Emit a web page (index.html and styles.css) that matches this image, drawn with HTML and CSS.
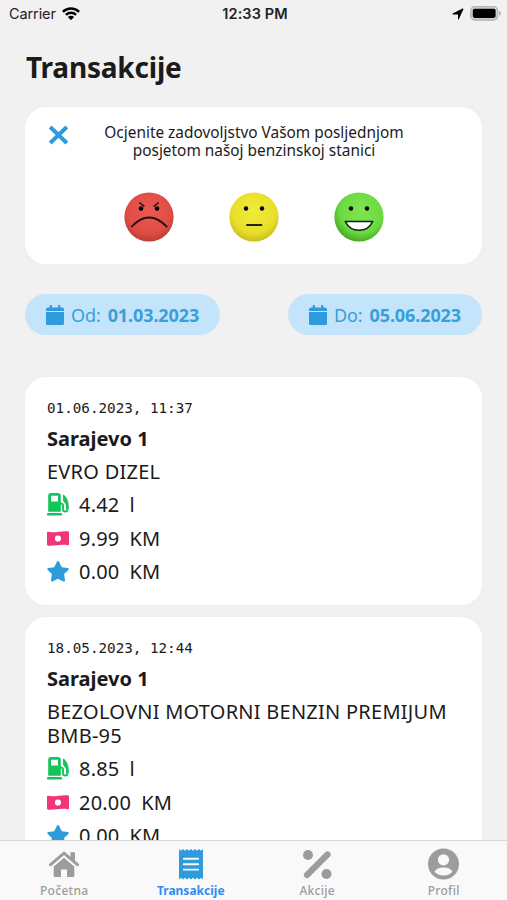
FILE: index.html
```html
<!DOCTYPE html>
<html lang="bs">
<head>
  <meta charset="UTF-8">
  <meta name="viewport" content="width=device-width, initial-scale=1.0">
  <title>Transakcije</title>
  <link rel="stylesheet" href="styles.css">
</head>
<body>
  <!-- shared icons -->
  <svg class="sprite" width="0" height="0" aria-hidden="true">
    <symbol id="calendar" viewBox="0 0 18 20">
      <path d="M2 2.500h1.700V1a1 1 0 0 1 2.200 0v1.500h6.200V1a1 1 0 0 1 2.200 0v1.500H16a2 2 0 0 1 2 2V6H0V4.500a2 2 0 0 1 2-2z"/>
      <path d="M0 7h18v11.500a1.500 1.500 0 0 1-1.500 1.500h-15a1.500 1.500 0 0 1-1.500-1.500z"/>
    </symbol>
    <symbol id="pump" viewBox="0 0 22 23">
      <path fill-rule="evenodd" d="M1.200 18.800V3a3 3 0 0 1 3-3h6.600a3 3 0 0 1 3 3v15.800zM4 2.800v5.600h7V2.800z"/>
      <rect y="20" width="15" height="2.600" rx=".8"/>
      <path d="M13 10.500h.8q2.200 0 2.200 2.300v3.400q0 2.300 2.200 2.300t2.200-2.300c0-3-.4-5.400-1.700-7.400" fill="none" stroke="currentColor" stroke-width="1.900"/>
      <path d="M16 1.300c2.800 1.800 4.700 4.500 5.400 8.700q.5 3.500.3 6.200h-2.200q.1-3.700-1-5.800c-1.500-.7-2.500-2.100-2.500-3.900V5.200z"/>
    </symbol>
    <symbol id="money" viewBox="0 0 22 15">
      <path fill-rule="evenodd" d="M0 1.600Q0 .5 1.200.7C8 2.200 12.500-.3 20.700.2q1.300.1 1.300 1.200v11.800q0 1.200-1.300 1C13 13 9 15.300 1.300 14.800Q0 14.700 0 13.600zM11 4.400a3.100 3.100 0 1 0 0 6.200 3.100 3.100 0 0 0 0-6.200z"/>
    </symbol>
    <symbol id="star" viewBox="0 0 22 21">
      <path d="M9.900.8q1.100-1.600 2.200 0l2.700 5.500 5.900.8q1.900.5.600 1.900l-4.200 4.100.9 6.100q0 1.900-1.700 1.200L11 17.700l-5.300 2.700q-1.700.7-1.700-1.200l.9-6.100L.7 9q-1.300-1.400.6-1.900l5.900-.8z"/>
    </symbol>
  </svg>

  <div class="app">
    <div class="status-bar">
      <div class="carrier">
        <span>Carrier</span>
        <svg width="18" height="13" viewBox="0 0 18 13">
          <g fill="none" stroke="#000" stroke-width="2.500">
            <path d="M.9 4.800a11.600 11.600 0 0 1 16.200 0"/>
            <path d="M3.900 7.900a7.300 7.300 0 0 1 10.200 0"/>
          </g>
          <path d="M9 13.200L5.900 10a4.400 4.400 0 0 1 6.200 0z"/>
        </svg>
      </div>
      <div class="time">12:33 PM</div>
      <div class="status-icons">
        <svg width="12" height="12" viewBox="0 0 12 12"><path d="M.6 5.600L10.600.5q1-.3.800.7L6.800 11.200q-.6.900-.8-.3V6.400H1.100Q-.2 6.200.6 5.600z"/></svg>
        <svg width="31" height="15" viewBox="0 0 31 15">
          <rect x=".7" y=".7" width="27" height="13.300" rx="4" fill="#d0d0d0" stroke="#b4b4b4" stroke-width="1.300"/>
          <rect x="2.800" y="2.800" width="22.800" height="9.100" rx="1.800"/>
          <path d="M29 4.800q2 .7 2 2.500t-2 2.500z" fill="#b4b4b4"/>
        </svg>
      </div>
    </div>

    <h1>Transakcije</h1>

    <div class="card rating">
      <svg class="close" width="21" height="20" viewBox="0 0 21 20"><path d="M2.200 2l16.600 16M18.800 2L2.200 18"/></svg>
      <p>Ocjenite zadovoljstvo Vašom posljednjom posjetom našoj benzinskoj stanici</p>
      <div class="faces">
        <svg width="50" height="50" viewBox="0 0 50 50">
          <defs><radialGradient id="red" cx=".5" cy=".38" r=".64"><stop offset="0" stop-color="#ea5850"/><stop offset=".7" stop-color="#df4d46"/><stop offset="1" stop-color="#b93a33"/></radialGradient></defs>
          <circle cx="25" cy="25" r="24.600" fill="url(#red)"/>
          <circle cx="17" cy="16.500" r="2.300"/><circle cx="33" cy="16.500" r="2.300"/>
          <path d="M15.200 10.500l5.200 3.900M34.800 10.500l-5.200 3.900" fill="none" stroke="#211" stroke-width="1.500"/>
          <path d="M7.800 34.500q17.200-18 34.800 0" fill="none" stroke="#211" stroke-width="1.800" stroke-linecap="round"/>
        </svg>
        <svg width="50" height="50" viewBox="0 0 50 50">
          <defs><radialGradient id="yellow" cx=".5" cy=".38" r=".64"><stop offset="0" stop-color="#f0ec3a"/><stop offset=".7" stop-color="#e8df2a"/><stop offset="1" stop-color="#c4b91c"/></radialGradient></defs>
          <circle cx="25" cy="25" r="24.600" fill="url(#yellow)"/>
          <circle cx="17" cy="16.500" r="2.200"/><circle cx="33" cy="16.500" r="2.200"/>
          <path d="M18 33h14.500" stroke="#221" stroke-width="1.800" stroke-linecap="round"/>
        </svg>
        <svg width="50" height="50" viewBox="0 0 50 50">
          <defs><radialGradient id="green" cx=".55" cy=".38" r=".64"><stop offset="0" stop-color="#7fe552"/><stop offset=".7" stop-color="#6cd941"/><stop offset="1" stop-color="#40a622"/></radialGradient></defs>
          <circle cx="25" cy="25" r="24.600" fill="url(#green)"/>
          <circle cx="17" cy="16.500" r="2.200"/><circle cx="33" cy="16.500" r="2.200"/>
          <path d="M11.300 29.500h27.400q-4.200 8.800-13.700 8.800t-13.700-8.800z" fill="#fff" stroke="#121" stroke-width="1.600" stroke-linejoin="round"/>
        </svg>
      </div>
    </div>

    <div class="filters">
      <div class="chip">
        <svg width="18" height="20"><use href="#calendar"/></svg>
        <span class="chip-label">Od:</span>
        <span class="chip-date">01.03.2023</span>
      </div>
      <div class="chip">
        <svg width="18" height="20"><use href="#calendar"/></svg>
        <span class="chip-label">Do:</span>
        <span class="chip-date">05.06.2023</span>
      </div>
    </div>

    <div class="list">
      <div class="card transaction">
        <div class="date">01.06.2023, 11:37</div>
        <div class="station">Sarajevo 1</div>
        <div class="product">EVRO DIZEL</div>
        <div class="row"><svg class="pump" width="22" height="23"><use href="#pump"/></svg><span>4.42</span><span>l</span></div>
        <div class="row"><svg class="money" width="22" height="15"><use href="#money"/></svg><span>9.99</span><span>KM</span></div>
        <div class="row"><svg class="star" width="22" height="21"><use href="#star"/></svg><span>0.00</span><span>KM</span></div>
      </div>
      <div class="card transaction">
        <div class="date">18.05.2023, 12:44</div>
        <div class="station">Sarajevo 1</div>
        <div class="product">BEZOLOVNI MOTORNI BENZIN PREMIJUM BMB-95</div>
        <div class="row"><svg class="pump" width="22" height="23"><use href="#pump"/></svg><span>8.85</span><span>l</span></div>
        <div class="row"><svg class="money" width="22" height="15"><use href="#money"/></svg><span>20.00</span><span>KM</span></div>
        <div class="row"><svg class="star" width="22" height="21"><use href="#star"/></svg><span>0.00</span><span>KM</span></div>
      </div>
    </div>

    <div class="tab-bar">
      <div class="tab">
        <svg width="30" height="32" viewBox="0 0 30 32">
          <path d="M15 9.800l10.300 8.700v9.500q0 1-1 1h-6.300v-7.500h-6V29H5.700q-1 0-1-1v-9.500z"/>
          <path d="M1.600 17.200L15 5.700l13.400 11.500" fill="none" stroke="#f9f9f9" stroke-width="5.500"/>
          <path d="M1.600 16.700L15 5.200l13.400 11.500" fill="none" stroke="currentColor" stroke-width="3" stroke-linecap="round"/>
          <path d="M21.500 4.300h4.500v10l-4.500-3.500z"/>
        </svg>
        <span>Početna</span>
      </div>
      <div class="tab active">
        <svg width="24" height="32" viewBox="0 0 24 32">
          <path d="M0 1l2 1.800L4 1l2 1.800L8 1l2 1.800L12 1l2 1.800L16 1l2 1.800L20 1l2 1.800L24 1v30.500l-2-1.800-2 1.800-2-1.800-2 1.800-2-1.800-2 1.800-2-1.800-2 1.800-2-1.800-2 1.800-2-1.800-2 1.800z"/>
          <path d="M4.800 10.800h14.400M4.800 16.200h14.400M4.800 21.600h14.400" stroke="#f9f9f9" stroke-width="1.900" stroke-linecap="round"/>
        </svg>
        <span>Transakcije</span>
      </div>
      <div class="tab">
        <svg width="30" height="32" viewBox="0 0 30 32">
          <circle cx="6" cy="7" r="5"/>
          <circle cx="24.500" cy="26" r="5"/>
          <path d="M5 27L25.500 6.500" stroke="currentColor" stroke-width="6.200" stroke-linecap="round"/>
        </svg>
        <span>Akcije</span>
      </div>
      <div class="tab">
        <svg width="31" height="32" viewBox="0 0 31 32">
          <circle cx="15.500" cy="16" r="15.500"/>
          <g fill="#f9f9f9"><circle cx="15.500" cy="11.800" r="5.600"/><path d="M6.500 23.800q2-4.300 9-4.300t9 4.300q-3.300 3.600-9 3.600t-9-3.600z"/></g>
        </svg>
        <span>Profil</span>
      </div>
    </div>
  </div>
</body>
</html>
```
FILE: styles.css
```css
body {
  margin: 0;
  background-color: #f1f1f1;
  color: #1b1b1b;
  font-family: "Noto Sans", sans-serif;
}

.app {
  display: flex;
  flex-direction: column;
  width: 507px;
  height: 900px;
  overflow: hidden;
}

.sprite {
  position: absolute;
}

svg {
  display: block;
  flex: none;
}

.status-bar {
  display: grid;
  grid-template-columns: 1fr auto 1fr;
  align-items: center;
  height: 27px;
  padding: 0 6px 0 9px;
  font-family: Inter, sans-serif;
  font-size: 14.5px;
  color: #222;
}

.carrier {
  display: flex;
  align-items: center;
  gap: 6px;
  letter-spacing: -0.1px;
}

.time {
  font-weight: 600;
  letter-spacing: 0.1px;
}

.status-icons {
  display: flex;
  align-items: center;
  justify-content: flex-end;
  gap: 6px;
}

h1 {
  height: 40px;
  margin: 20px 0 20px 26px;
  font-size: 28px;
  line-height: 40px;
  letter-spacing: -0.2px;
}

.card {
  background-color: #fff;
  border-radius: 21px;
  box-shadow: 0 0 10px rgba(0, 0, 0, 0.02);
}

.rating {
  display: grid;
  grid-template-columns: 21px 1fr 21px;
  grid-template-rows: 36px 50px;
  row-gap: 32px;
  flex: none;
  box-sizing: border-box;
  height: 157px;
  margin: 0 25px;
  padding: 17px 22px 0;
}

.close {
  margin: 1px 0 0 1px;
  fill: none;
  stroke: #2e9bdc;
  stroke-width: 4;
}

.rating p {
  margin: 0 0 0 1px;
  font-size: 15.4px;
  line-height: 18px;
  text-align: center;
}

.faces {
  grid-column: 1 / -1;
  display: flex;
  justify-content: center;
  gap: 55px;
}

.filters {
  display: flex;
  justify-content: space-between;
  margin: 30px 25px 0;
}

.chip {
  display: flex;
  align-items: center;
  box-sizing: border-box;
  height: 41px;
  padding: 0 21px;
  border-radius: 21px;
  background-color: #c3e4fa;
  color: #379fdd;
  font-size: 18px;
  letter-spacing: -0.1px;
}

.chip svg {
  margin-right: 7px;
  fill: #2e9bdc;
}

.chip-date {
  margin-left: 7px;
  font-weight: bold;
}

.list {
  display: flex;
  flex: 1;
  flex-direction: column;
  gap: 12px;
  min-height: 0;
  margin: 42px 25px 0;
}

.transaction {
  flex: none;
  padding: 19px 22px 17px;
}

.date {
  font-family: "DejaVu Sans Mono", monospace;
  font-size: 14.25px;
  line-height: 24px;
}

.station {
  margin: 6px 0 8px;
  font-size: 20px;
  font-weight: bold;
  line-height: 26px;
}

.product {
  margin-bottom: 4px;
  font-size: 20px;
  line-height: 24px;
  letter-spacing: 0.25px;
}

.row {
  display: flex;
  align-items: center;
  gap: 10px;
  height: 33.4px;
  font-size: 20px;
  letter-spacing: 0.2px;
}

.pump {
  color: #13c45b;
  fill: #13c45b;
}

.money {
  fill: #f2347b;
}

.star {
  fill: #2e9bdc;
}

.tab-bar {
  display: grid;
  grid-template-columns: repeat(4, 1fr);
  flex: none;
  box-sizing: border-box;
  height: 60px;
  padding-left: 1px;
  border-top: 1px solid #d9d9d9;
  background-color: #f9f9f9;
}

.tab {
  display: flex;
  flex-direction: column;
  align-items: center;
  padding-top: 7px;
  color: #9c9c9c;
  fill: #9c9c9c;
  font-size: 12px;
  line-height: 22px;
  font-weight: 500;
  letter-spacing: 0.3px;
}

.active {
  color: #2f8cf5;
  fill: #2e9bdc;
  font-weight: bold;
  letter-spacing: 0;
}
```
